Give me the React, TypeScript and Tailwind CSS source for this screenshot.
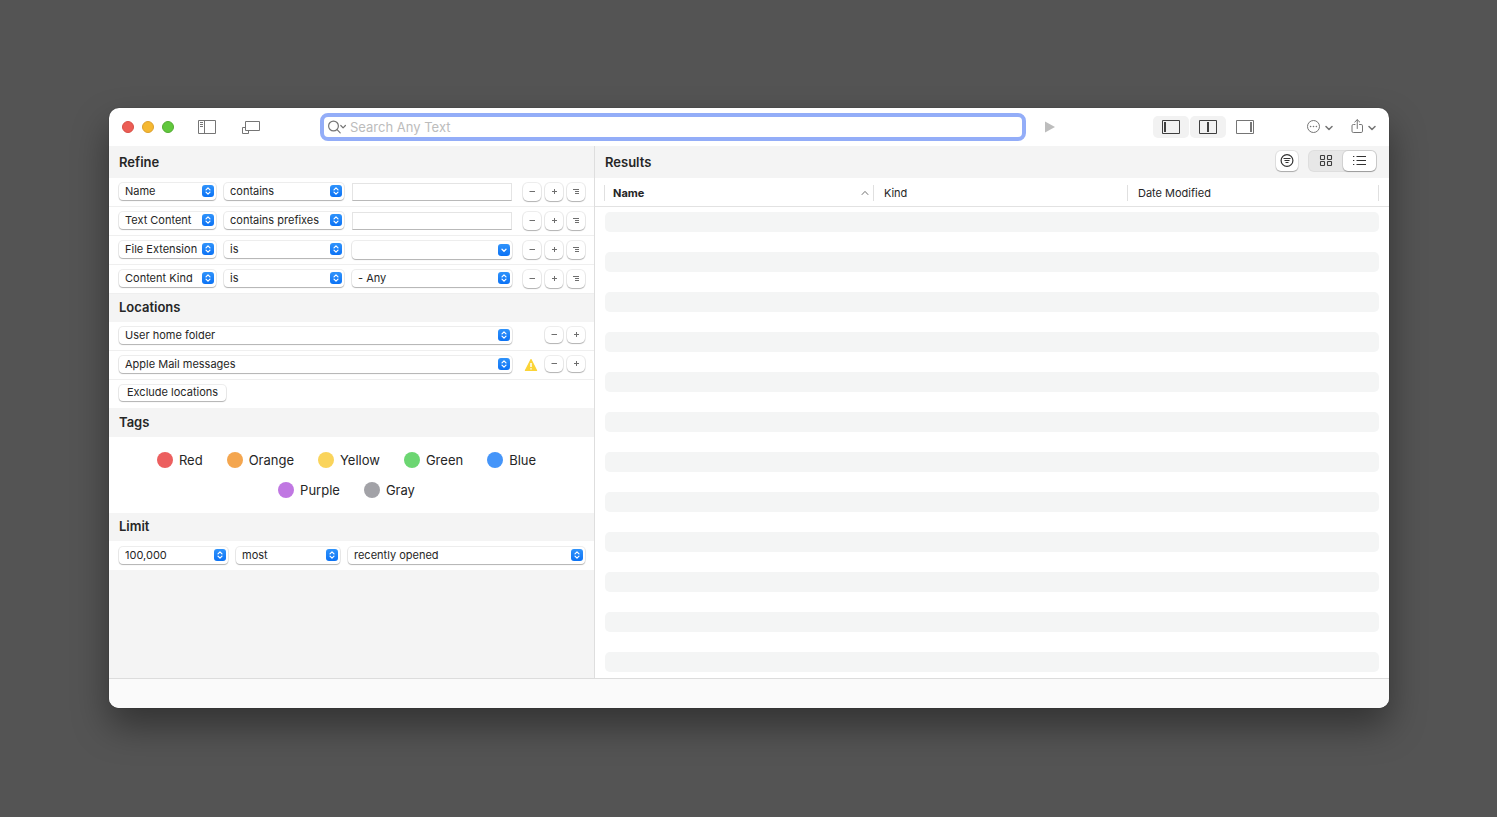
import {useState} from 'react'
import type {ReactNode} from 'react'

const refineRows = [
  {attribute: 'Name', operator: 'contains', kind: 'text'},
  {attribute: 'Text Content', operator: 'contains prefixes', kind: 'text'},
  {attribute: 'File Extension', operator: 'is', kind: 'combo'},
  {attribute: 'Content Kind', operator: 'is', kind: 'select'}
]

const attributes = ['Name', 'Text Content', 'File Extension', 'Content Kind']
const operators = ['contains', 'contains prefixes', 'is']
const locations = ['User home folder', 'Apple Mail messages']

const tags = [
  {name: 'Red', color: 'bg-[#ec5f5f]'},
  {name: 'Orange', color: 'bg-[#f4a64f]'},
  {name: 'Yellow', color: 'bg-[#fad45b]'},
  {name: 'Green', color: 'bg-[#6cd672]'},
  {name: 'Blue', color: 'bg-[#4595f9]'},
  {name: 'Purple', color: 'bg-[#c077e2]'},
  {name: 'Gray', color: 'bg-[#a2a2a7]'}
]

const controlShadow = 'shadow-[0_0_0_1px_rgba(0,0,0,0.07),0_1px_1px_rgba(0,0,0,0.25)]'

function Popup({
  label,
  value,
  options,
  className
}: {
  label: string
  value: string
  options: string[]
  className: string
}) {
  return (
    <span className={`relative block h-[17px] ${className}`}>
      <select
        aria-label={label}
        defaultValue={value}
        className={`block h-[17px] w-full appearance-none rounded-[4px] bg-white pl-[6px] pr-4 text-[11px] leading-[17px] outline-none ${controlShadow}`}>
        {options.map(option => (
          <option key={option}>{option}</option>
        ))}
      </select>
      <span className="pointer-events-none absolute right-[2px] top-[2px] flex size-3 items-center justify-center rounded-[3px] bg-linear-to-b from-[#2f93fb] to-[#0a72f5]">
        <svg width="12" height="12" viewBox="0 0 12 12" fill="none" stroke="#fff" strokeWidth="1.2" strokeLinecap="round" strokeLinejoin="round">
          <path d="M4 4.8 6 2.8 8 4.8M4 7.2 6 9.2 8 7.2" />
        </svg>
      </span>
    </span>
  )
}

function SmallButton({label, className, children}: {label: string; className: string; children: ReactNode}) {
  return (
    <button
      aria-label={label}
      className={`flex items-center justify-center rounded-[5px] bg-white text-[#6e6e6e] ${controlShadow} ${className}`}>
      {children}
    </button>
  )
}

function MinusIcon() {
  return (
    <svg width="8" height="8" viewBox="0 0 8 8" stroke="currentColor">
      <path d="M1.5 3.5h5.5" />
    </svg>
  )
}

function PlusIcon() {
  return (
    <svg width="8" height="8" viewBox="0 0 8 8" stroke="currentColor">
      <path d="M2 3.5h5M4.5 1v5" />
    </svg>
  )
}

function NestIcon() {
  return (
    <svg width="8" height="8" viewBox="0 0 8 8" stroke="currentColor">
      <path d="M1 1.5h6M3 3.5h4M3 5.5h4" />
    </svg>
  )
}

function ChevronDown() {
  return (
    <svg width="8" height="8" viewBox="0 0 8 8" fill="none" stroke="currentColor" strokeWidth="1.5" strokeLinecap="round" strokeLinejoin="round">
      <path d="M1 3.5 4 6.5 7 3.5" />
    </svg>
  )
}

function PaneIcon({bar}: {bar: number}) {
  return (
    <svg width="18" height="14" viewBox="0 0 18 14" fill="none" stroke="currentColor">
      <path d="M.5.5h17v13H.5z" />
      <path d={`M${bar} 2v10`} strokeWidth="2" />
    </svg>
  )
}

function SectionTitle({className = 'h-[29px] pb-[2px]', children}: {className?: string; children: ReactNode}) {
  return (
    <h2 className={`flex items-center bg-[#f4f4f4] px-[10px] text-[13px] font-semibold leading-4 ${className}`}>
      {children}
    </h2>
  )
}

function Toolbar() {
  const [panes, setPanes] = useState([true, true, false])
  const paneBars = [3, 9, 15]
  const paneNames = ['Criteria', 'Results', 'Preview']

  const togglePane = (index: number) => {
    setPanes(panes.map((open, i) => (i === index ? !open : open)))
  }

  return (
    <header className="flex h-[38px] items-center px-[13px] text-[#757575]">
      <div className="flex gap-2">
        <button aria-label="Close" className="size-3 rounded-full border border-[#d84f47] bg-[#ec5d55]" />
        <button aria-label="Minimize" className="size-3 rounded-full border border-[#dda12e] bg-[#f5b831]" />
        <button aria-label="Zoom" className="size-3 rounded-full border border-[#53ac33] bg-[#61c83d]" />
      </div>
      <button aria-label="Sidebar" className="ml-6">
        <svg width="18" height="14" viewBox="0 0 18 14" fill="none" stroke="currentColor">
          <path d="M.5.5h17v13H.5zM6.5.5v13" />
          <path d="M2 2.5h3M2 4.5h3M2 6.5h3" />
        </svg>
      </button>
      <button aria-label="Windows" className="ml-[26px]">
        <svg width="18" height="14" viewBox="0 0 18 14" fill="none" stroke="currentColor">
          <path d="M3.5 1.5h14v9h-14z" />
          <path d="M3.5 7.5h-3v6h6v-3" />
        </svg>
      </button>
      <label className="ml-[60px] flex h-7 min-w-0 flex-1 items-center rounded-[8px] border-4 border-[#93adf8] bg-white pl-1">
        <svg width="19" height="14" viewBox="0 0 19 14" fill="none" stroke="currentColor" strokeWidth="1.2" strokeLinecap="round" strokeLinejoin="round">
          <circle cx="5.5" cy="6" r="4.9" />
          <path d="M9.1 9.6 12.2 12.8M12.8 5.5l2.3 2.3L17.4 5.5" />
        </svg>
        <input
          aria-label="Search"
          placeholder="Search Any Text"
          className="ml-[3px] h-5 min-w-0 flex-1 bg-transparent text-[13px] text-black outline-none placeholder:text-[#bcbcbc]"
        />
      </label>
      <button aria-label="Run search" className="ml-[19px] text-[#bdbdbd]">
        <svg width="10" height="12" viewBox="0 0 10 12" fill="currentColor">
          <path d="M0 0.5 10 6 0 11.5z" />
        </svg>
      </button>
      <div className="ml-[98px] flex gap-px">
        {panes.map((open, index) => (
          <button
            key={paneNames[index]}
            aria-label={paneNames[index]}
            aria-pressed={open}
            onClick={() => togglePane(index)}
            className={`flex h-[22px] w-9 items-center justify-center rounded-[5px] ${open ? 'bg-[#f2f2f2] text-[#3f3f3f]' : ''}`}>
            <PaneIcon bar={paneBars[index]} />
          </button>
        ))}
      </div>
      <button aria-label="More" className="ml-11 flex items-center gap-1">
        <svg width="14" height="14" viewBox="0 0 14 14" fill="none" stroke="currentColor">
          <circle cx="6.5" cy="6.5" r="6" />
          <path d="M3.6 6.5h.01M6.5 6.5h.01M9.4 6.5h.01" strokeWidth="1.6" strokeLinecap="round" />
        </svg>
        <ChevronDown />
      </button>
      <button aria-label="Share" className="ml-[18px] flex items-center gap-1">
        <svg width="13" height="16" viewBox="0 0 13 16" fill="none" stroke="currentColor" strokeLinecap="round" strokeLinejoin="round">
          <path d="M4 5.5H2.3Q1 5.5 1 6.8v5.4q0 1.3 1.3 1.3h7.9q1.3 0 1.3-1.3V6.8q0-1.3-1.3-1.3H8.5" />
          <path d="M6.25 9.5V.8M3.8 3 6.25.7 8.7 3" />
        </svg>
        <ChevronDown />
      </button>
    </header>
  )
}

function RefineSection() {
  return (
    <section>
      <SectionTitle className="h-8">Refine</SectionTitle>
      {refineRows.map(row => (
        <div
          key={row.attribute}
          className="flex h-[29px] items-start border-b border-[#efefef] pl-[10px] pr-[9px] pt-[5px]">
          <Popup label="Attribute" value={row.attribute} options={attributes} className="w-[97px]" />
          <Popup label="Operator" value={row.operator} options={operators} className="ml-2 w-[120px]" />
          <div className="ml-2 min-w-0 flex-1">
            {row.kind === 'text' && (
              <input
                aria-label={`${row.attribute} value`}
                className="block h-[18px] w-full border border-[#e4e4e4] border-b-[#b9b9b9] bg-white px-1 text-[11px] outline-none"
              />
            )}
            {row.kind === 'combo' && (
              <div className={`flex h-[18px] items-center rounded-[4px] bg-white pr-[2px] ${controlShadow}`}>
                <input
                  aria-label={`${row.attribute} value`}
                  className="h-4 min-w-0 flex-1 bg-transparent px-[6px] text-[11px] outline-none"
                />
                <button
                  aria-label="Show values"
                  className="flex size-3 items-center justify-center rounded-[3px] bg-linear-to-b from-[#2f93fb] to-[#0a72f5]">
                  <svg width="12" height="12" viewBox="0 0 12 12" fill="none" stroke="#fff" strokeWidth="1.3" strokeLinecap="round" strokeLinejoin="round">
                    <path d="M4 5.2 6 7.2 8 5.2" />
                  </svg>
                </button>
              </div>
            )}
            {row.kind === 'select' && (
              <Popup label="Content kind value" value="- Any" options={['- Any']} className="w-full" />
            )}
          </div>
          <div className="ml-[11px] flex gap-1">
            <SmallButton label="Remove" className="size-[18px]">
              <MinusIcon />
            </SmallButton>
            <SmallButton label="Add" className="size-[18px]">
              <PlusIcon />
            </SmallButton>
            <SmallButton label="Add group" className="size-[18px]">
              <NestIcon />
            </SmallButton>
          </div>
        </div>
      ))}
    </section>
  )
}

function LocationsSection() {
  return (
    <section>
      <SectionTitle className="h-7 pb-[2px]">Locations</SectionTitle>
      {locations.map((location, index) => (
        <div
          key={location}
          className="flex h-[29px] items-start border-b border-[#efefef] pl-[10px] pr-[9px] pt-[5px]">
          <Popup label="Location" value={location} options={locations} className="min-w-0 flex-1" />
          <div className="ml-3 flex w-[21px] pt-[2px]">
            {index === 1 && (
              <svg width="14" height="14" viewBox="0 0 14 14" role="img" aria-label="Needs permission">
                <path d="M7 1.6 12.6 12.5H1.4z" fill="#fbd437" stroke="#fbd437" strokeWidth="1.2" strokeLinejoin="round" />
                <path d="M7 5v4M7 10.2v1.4" stroke="#fff" strokeWidth="1.5" />
              </svg>
            )}
          </div>
          <div className="flex gap-1">
            <SmallButton label="Remove location" className="h-4 w-[18px]">
              <MinusIcon />
            </SmallButton>
            <SmallButton label="Add location" className="h-4 w-[18px]">
              <PlusIcon />
            </SmallButton>
          </div>
        </div>
      ))}
      <div className="flex h-7 items-start px-[10px] pt-[5px]">
        <button className={`flex h-4 items-center rounded-[4px] bg-white px-2 pb-[2px] text-[11px] leading-4 ${controlShadow}`}>
          Exclude locations
        </button>
      </div>
    </section>
  )
}

function Results() {
  const [view, setView] = useState('list')
  const stripes = Array.from({length: 23}, (_, i) => i)

  return (
    <main className="flex min-w-0 flex-1 flex-col bg-white pb-[6px]">
      <div className="flex h-8 items-center bg-[#f4f4f4] pl-[10px] pr-[13px]">
        <h2 className="flex-1 text-[13px] font-semibold leading-4">Results</h2>
        <div className="flex items-center gap-[11px] pb-[2px]">
          <button
            aria-label="Filter results"
            className={`flex h-5 w-[22px] items-center justify-center rounded-[5px] bg-white ${controlShadow}`}>
            <svg width="14" height="14" viewBox="0 0 14 14" fill="none" stroke="#333">
              <circle cx="7" cy="6.5" r="5.9" strokeWidth="1.2" />
              <path d="M3.5 4.5h7M4.5 6.5h5M5.5 8.5h3" strokeWidth="1.1" />
            </svg>
          </button>
          <div className="flex h-5 rounded-[5px] bg-[#e7e7e7] shadow-[0_0_0_1px_rgba(0,0,0,0.09)]">
            <button
              aria-label="Icons"
              aria-pressed={view === 'icons'}
              onClick={() => setView('icons')}
              className={`flex w-[34px] items-center justify-center rounded-[5px] ${view === 'icons' ? `bg-white ${controlShadow}` : ''}`}>
              <svg width="14" height="14" viewBox="0 0 14 14" fill="none" stroke="#3c3c3c" strokeWidth="1.1">
                <rect x="1.5" y="1.5" width="4" height="4" rx=".6" />
                <rect x="8.5" y="1.5" width="4" height="4" rx=".6" />
                <rect x="1.5" y="7.5" width="4" height="4" rx=".6" />
                <rect x="8.5" y="7.5" width="4" height="4" rx=".6" />
              </svg>
            </button>
            <button
              aria-label="List"
              aria-pressed={view === 'list'}
              onClick={() => setView('list')}
              className={`flex w-[33px] items-center justify-center rounded-[5px] ${view === 'list' ? `bg-white ${controlShadow}` : ''}`}>
              <svg width="13" height="12" viewBox="0 0 13 12" stroke="#333">
                <path d="M3.5 1.5H13M3.5 5.5H13M3.5 9.5H13" />
                <path d="M0 1.5h1.3M0 5.5h1.3M0 9.5h1.3" strokeWidth="1.2" />
              </svg>
            </button>
          </div>
        </div>
      </div>
      <table className="w-full table-fixed border-separate border-spacing-0 text-left text-[11px] leading-4">
        <thead>
          <tr>
            <th className="h-[29px] w-[35%] border-b border-[#e2e2e2] p-0 pl-[9px] pt-[2px] font-bold">
              <div className="flex h-4 items-center border-l border-[#e0e0e0] pl-2">
                <span className="flex-1">Name</span>
                <svg className="mr-1" width="8" height="6" viewBox="0 0 8 6" fill="none" stroke="#707070">
                  <path d="M.8 4.8 4 1.4 7.2 4.8" />
                </svg>
              </div>
            </th>
            <th className="w-[32%] border-b border-[#e2e2e2] p-0 pt-[2px] font-normal">
              <div className="border-l border-[#e0e0e0] pl-[10px]">Kind</div>
            </th>
            <th className="border-b border-[#e2e2e2] p-0 pr-[10px] pt-[2px] font-normal">
              <div className="border-x border-[#e0e0e0] pl-[10px]">Date Modified</div>
            </th>
          </tr>
        </thead>
        <tbody>
          <tr className="h-[5px]">
            <td colSpan={3} className="p-0" />
          </tr>
          {stripes.map(i => (
            <tr key={i}>
              <td colSpan={3} className="px-[10px] py-0">
                <div className={`h-5 rounded-[5px] ${i % 2 === 0 ? 'bg-[#f4f5f5]' : ''}`} />
              </td>
            </tr>
          ))}
        </tbody>
      </table>
    </main>
  )
}

export default function App() {
  return (
    <div className="min-h-screen bg-[#545454] pb-[109px] pl-[109px] pr-[108px] pt-[108px] font-['Inter',sans-serif] text-[#262626]">
      <div className="overflow-hidden rounded-[10px] bg-white shadow-[0_0_1px_rgba(0,0,0,0.6),0_18px_36px_rgba(0,0,0,0.4)]">
        <Toolbar />
        <div className="flex">
          <aside className="w-[38%] min-w-[486px] max-w-[486px] border-r border-[#dedede] bg-[#f4f4f4]">
            <div className="bg-white">
              <RefineSection />
              <LocationsSection />
              <section>
                <SectionTitle>Tags</SectionTitle>
                <div className="flex flex-wrap justify-center gap-x-6 gap-y-[14px] py-[15px] pl-8 pr-[42px]">
                  {tags.map(tag => (
                    <label key={tag.name} className="flex items-center gap-[6px] text-[13px] leading-4">
                      <input type="checkbox" className={`size-4 appearance-none rounded-full ${tag.color}`} />
                      {tag.name}
                    </label>
                  ))}
                </div>
              </section>
              <section>
                <SectionTitle className="h-7 pb-[2px]">Limit</SectionTitle>
                <div className="flex h-[29px] items-start gap-2 pl-[10px] pr-[9px] pt-[6px]">
                  <Popup label="Limit" value="100,000" options={['100,000']} className="w-[109px]" />
                  <Popup label="Order" value="most" options={['most', 'least']} className="w-[104px]" />
                  <Popup
                    label="Sorting"
                    value="recently opened"
                    options={['recently opened', 'recently modified']}
                    className="min-w-0 flex-1"
                  />
                </div>
              </section>
            </div>
          </aside>
          <Results />
        </div>
        <footer className="h-[30px] border-t border-[#dcdcdc] bg-[#fafafa]" />
      </div>
    </div>
  )
}
